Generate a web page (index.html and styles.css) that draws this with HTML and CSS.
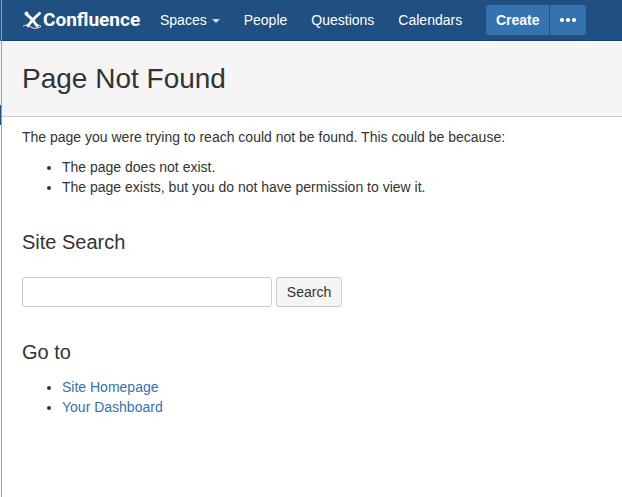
FILE: index.html
```html
<!DOCTYPE html>
<html lang="en">
<head>
<meta charset="utf-8">
<title>Page Not Found</title>
<link rel="stylesheet" href="styles.css">
</head>
<body>
<div class="page">
  <nav class="topbar">
    <a class="logo" href="#">
      <svg class="logo-mark" viewBox="0 0 21 20" width="21" height="20" aria-hidden="true">
        <path d="M4 4 C7 6 10 9 12.5 12.5 C13.5 14 14.5 15.5 16 16.5" fill="none" stroke="#fff" stroke-width="2.8"/>
        <path d="M18.5 2.5 C15 5.5 11 9.5 8.5 12.5 C7.5 14 6.5 15.5 5 16.5" fill="none" stroke="#fff" stroke-width="2.8"/>
        <circle cx="4.5" cy="3.5" r="2" fill="#fff"/>
        <path d="M1 16.5 C3 14.5 6 15 8 16.5 C10.5 18.5 15 19 19 16.5 C17.5 15 15.5 14.8 14 15.5" fill="none" stroke="#fff" stroke-width="1"/>
      </svg>
      <span class="logo-text">Confluence</span>
    </a>
    <ul class="nav">
      <li><a href="#">Spaces<span class="caret"></span></a></li>
      <li><a href="#">People</a></li>
      <li><a href="#">Questions</a></li>
      <li><a href="#">Calendars</a></li>
    </ul>
    <div class="actions">
      <a class="create" href="#">Create</a>
      <a class="more" href="#" aria-label="More"><i></i><i></i><i></i></a>
    </div>
  </nav>
  <header class="page-head"><h1>Page Not Found</h1></header>
  <main class="content">
    <p class="intro">The page you were trying to reach could not be found. This could be because:</p>
    <ul class="list">
      <li>The page does not exist.</li>
      <li>The page exists, but you do not have permission to view it.</li>
    </ul>
    <h2 class="search-title">Site Search</h2>
    <form class="search">
      <input class="search-input" type="text" aria-label="Search">
      <button class="search-btn" type="button">Search</button>
    </form>
    <h2 class="goto-title">Go to</h2>
    <ul class="list links">
      <li><a href="#">Site Homepage</a></li>
      <li><a href="#">Your Dashboard</a></li>
    </ul>
  </main>
</div>
</body>
</html>
```
FILE: styles.css
```css
* { box-sizing: border-box; }
html, body { margin: 0; height: 100%; }
body {
  background: #fff linear-gradient(to bottom, #205081 0 41px, #f5f5f5 41px 105px, #205081 105px 125px, #fff 125px) left top / 1px 100% no-repeat;
  color: #333;
  font-family: "Liberation Sans", Arial, sans-serif;
  font-size: 14px;
  line-height: 20px;
  overflow: hidden;
}
a { text-decoration: none; }
.page { min-height: 497px; margin-left: 1px; border-left: 1px solid #a0a0a0; }
.topbar {
  display: flex;
  align-items: center;
  height: 41px;
  padding: 0 0 0 20px;
  background: #205081;
  border-bottom: 1px solid #1b3f66;
}
.logo { display: flex; align-items: center; color: #fff; width: 138px; }
.logo-mark { flex: none; }
.logo-text { font-family: Roboto, sans-serif; font-size: 19px; font-weight: 700; letter-spacing: 0; }
.nav { display: flex; gap: 24px; margin: 0; padding: 0; list-style: none; }
.nav a { color: #fff; }
.caret {
  display: inline-block;
  margin-left: 5px;
  vertical-align: middle;
  border: 4px solid transparent;
  border-top-color: #ccd6e2;
  border-bottom: 0;
}
.actions { display: flex; height: 30px; margin-left: 24px; }
.create, .more { display: flex; align-items: center; justify-content: center; background: #3572b0; color: #fff; }
.create { width: 64px; font-weight: 700; border-radius: 3px 0 0 3px; border-right: 1px solid #205081; }
.more { width: 36px; gap: 2.5px; border-radius: 0 3px 3px 0; }
.more i { width: 3.5px; height: 3.5px; border-radius: 50%; background: #fff; }
.page-head {
  height: 76px;
  padding: 20px 20px 0;
  background: #f5f5f5;
  border-bottom: 1px solid #ccc;
}
h1 { margin: 0; font-size: 28px; font-weight: 400; line-height: 36px; }
.content { padding: 10px 20px 0; }
.intro { margin: 0; }
.list { margin: 10px 0 0; padding-left: 40px; }
h2 { margin: 0; font-size: 20px; font-weight: 400; line-height: 24px; }
.search-title { margin-top: 33px; }
.search { display: flex; gap: 4px; margin-top: 23px; }
.search-input { width: 250px; height: 30px; padding: 4px 6px; background: #fff; border: 1px solid #ccc; border-radius: 3px; }
.search-btn { width: 66px; height: 30px; padding: 0; font: inherit; color: #333; background: #f5f5f5; border: 1px solid #ccc; border-radius: 3px; }
.goto-title { margin-top: 33px; }
.links { margin-top: 13px; }
.links a { color: #3572b0; }
```
